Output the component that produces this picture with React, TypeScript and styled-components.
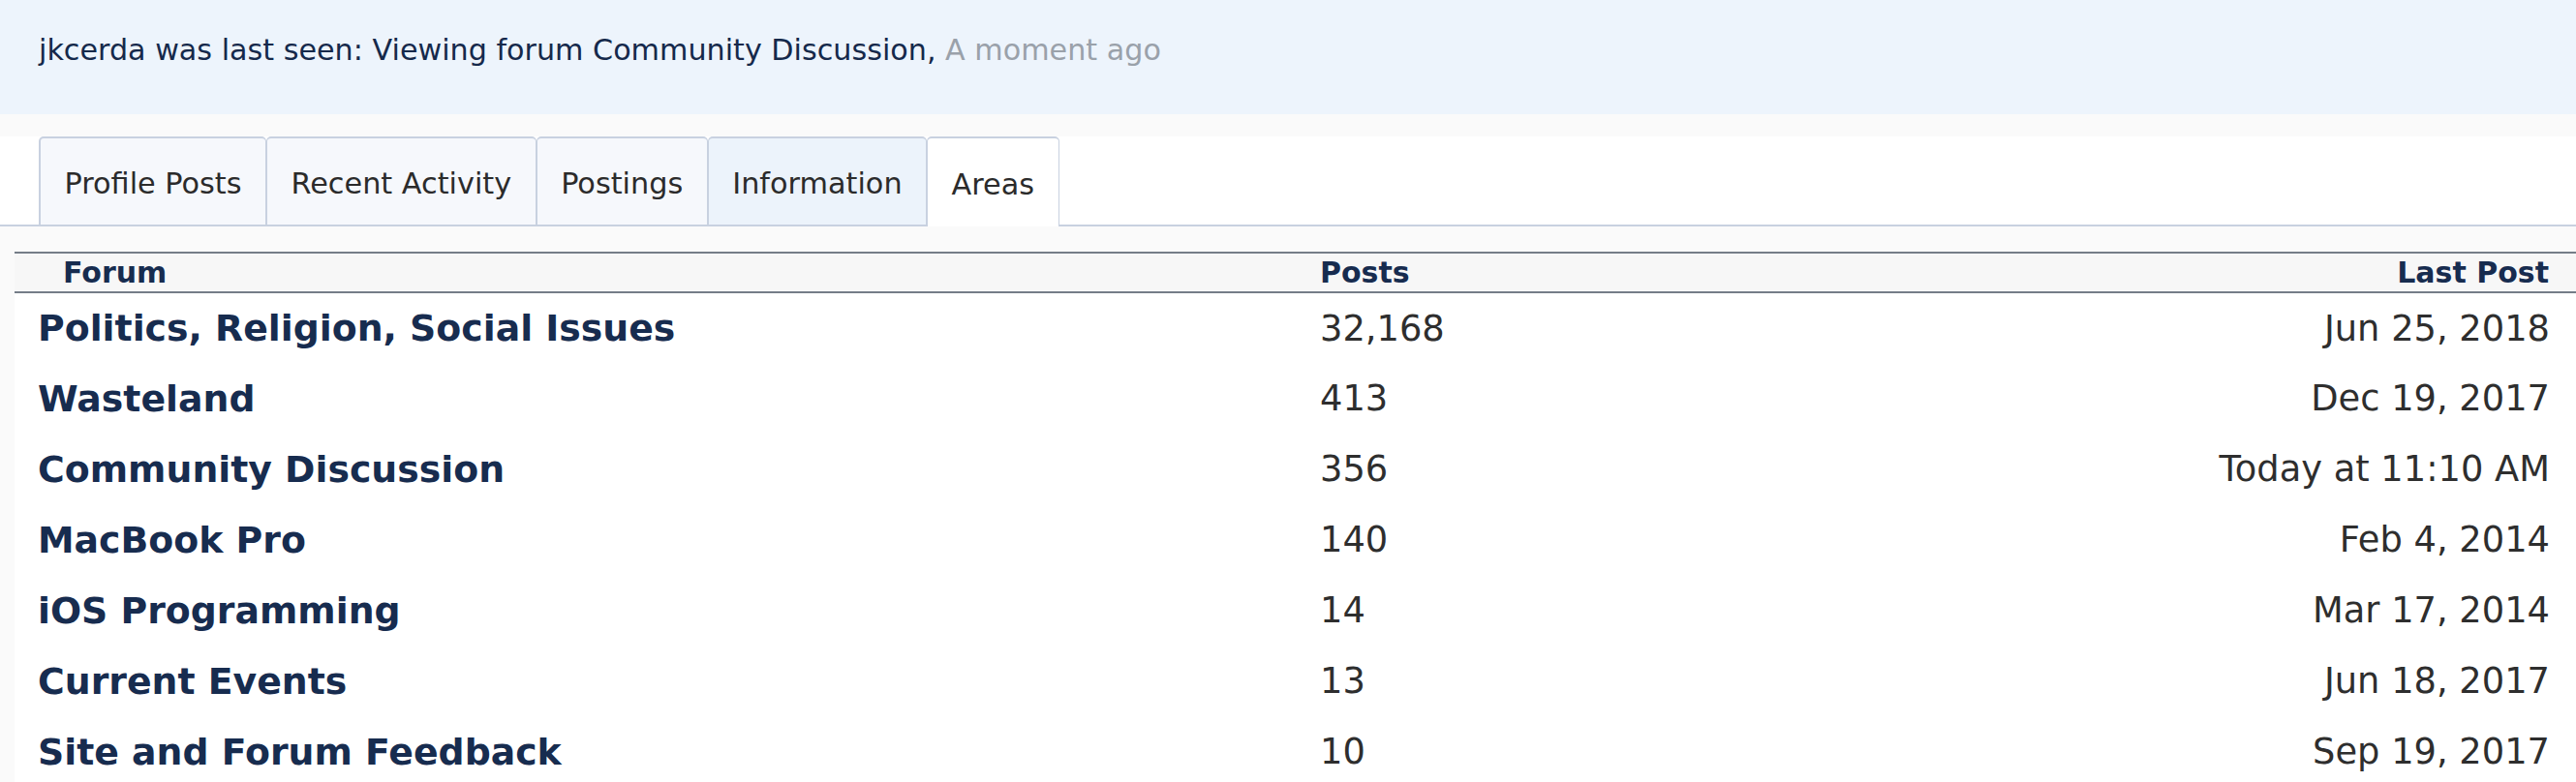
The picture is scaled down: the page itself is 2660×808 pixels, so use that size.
import React from 'react';
import styled, { createGlobalStyle } from 'styled-components';

const GlobalStyle = createGlobalStyle`
  html, body {
    margin: 0;
    padding: 0;
    background: #fafafa;
    font-family: "DejaVu Sans", Verdana, sans-serif;
  }
`;

const Page = styled.div`
  width: 100%;
  overflow: hidden;
`;

// "last seen" banner
const SeenBanner = styled.div`
  background: #edf4fc;
  height: 118px;
  box-sizing: border-box;
  padding: 34px 40px 0;
  font-size: 30.2px;
  color: #15294b;
  white-space: nowrap;
`;

const Muted = styled.span`
  color: #9aa1aa;
`;

const TabBar = styled.ul`
  list-style: none;
  margin: 23px 0 0;
  padding: 0 0 0 40px;
  display: flex;
  align-items: flex-end;
  height: 93px;
  box-sizing: border-box;
  background: #fff;
  border-bottom: 2px solid #c8d1e0;
`;

const Tab = styled.li<{ $active?: boolean; $hover?: boolean }>`
  height: ${(p) => (p.$active ? '93px' : '91px')};
  margin-bottom: ${(p) => (p.$active ? '-2px' : '0')};
  box-sizing: border-box;
  display: flex;
  align-items: center;
  padding: 4px 24.5px 0;
  font-size: 30.3px;
  color: #2b2b2b;
  border: 2px solid #c8d1e0;
  border-bottom: none;
  border-right-width: 1px;
  border-radius: 5px 5px 0 0;
  background: ${(p) => (p.$active ? '#fff' : p.$hover ? '#ecf3fb' : '#f6f8fc')};
  & + & {
    border-left-width: 1px;
  }
`;

const Table = styled.table`
  margin: 26px 0 0 15px;
  width: calc(100% - 15px);
  border-collapse: collapse;
  table-layout: fixed;
  background: #fff;
`;

const HeadRow = styled.tr`
  background: #f7f7f7;
  border-top: 2px solid #757d88;
  border-bottom: 2px solid #757d88;
`;

const HeadCell = styled.th<{ $align?: 'left' | 'right' }>`
  height: 39px;
  padding: 0 ${(p) => (p.$align === 'right' ? '28px' : '0')} 0 ${(p) => (p.$align === 'right' ? '0' : '15px')};
  text-align: ${(p) => p.$align || 'left'};
  font-size: 30px;
  font-weight: bold;
  color: #172c4f;
  &:first-child {
    padding-left: 50px;
  }
`;

const Row = styled.tr`
  height: 73px;
`;

const ForumName = styled.td`
  padding: 0 0 0 24px;
  font-size: 37.8px;
  font-weight: bold;
  color: #172c4f;
  white-space: nowrap;
`;

const Cell = styled.td<{ $align?: 'left' | 'right' }>`
  padding: 0 ${(p) => (p.$align === 'right' ? '27px' : '0')} 0 ${(p) => (p.$align === 'right' ? '0' : '15px')};
  text-align: ${(p) => p.$align || 'left'};
  font-size: 36.8px;
  color: #2e2e2e;
  white-space: nowrap;
`;

const tabs = ['Profile Posts', 'Recent Activity', 'Postings', 'Information', 'Areas'];

const areas = [
  { name: 'Politics, Religion, Social Issues', posts: '32,168', last: 'Jun 25, 2018' },
  { name: 'Wasteland', posts: '413', last: 'Dec 19, 2017' },
  { name: 'Community Discussion', posts: '356', last: 'Today at 11:10 AM' },
  { name: 'MacBook Pro', posts: '140', last: 'Feb 4, 2014' },
  { name: 'iOS Programming', posts: '14', last: 'Mar 17, 2014' },
  { name: 'Current Events', posts: '13', last: 'Jun 18, 2017' },
  { name: 'Site and Forum Feedback', posts: '10', last: 'Sep 19, 2017' },
];

const App: React.FC = () => {
  return (
    <Page>
      <GlobalStyle />
      <SeenBanner>
        jkcerda was last seen: Viewing forum Community Discussion, <Muted>A moment ago</Muted>
      </SeenBanner>
      <TabBar>
        {tabs.map((t) => (
          <Tab key={t} $active={t === 'Areas'} $hover={t === 'Information'}>
            {t}
          </Tab>
        ))}
      </TabBar>
      <Table>
        <colgroup>
          <col style={{ width: 1333 }} />
          <col style={{ width: 600 }} />
          <col />
        </colgroup>
        <thead>
          <HeadRow>
            <HeadCell>Forum</HeadCell>
            <HeadCell>Posts</HeadCell>
            <HeadCell $align="right">Last Post</HeadCell>
          </HeadRow>
        </thead>
        <tbody>
          {areas.map((a) => (
            <Row key={a.name}>
              <ForumName>{a.name}</ForumName>
              <Cell>{a.posts}</Cell>
              <Cell $align="right">{a.last}</Cell>
            </Row>
          ))}
        </tbody>
      </Table>
    </Page>
  );
};

export default App;
